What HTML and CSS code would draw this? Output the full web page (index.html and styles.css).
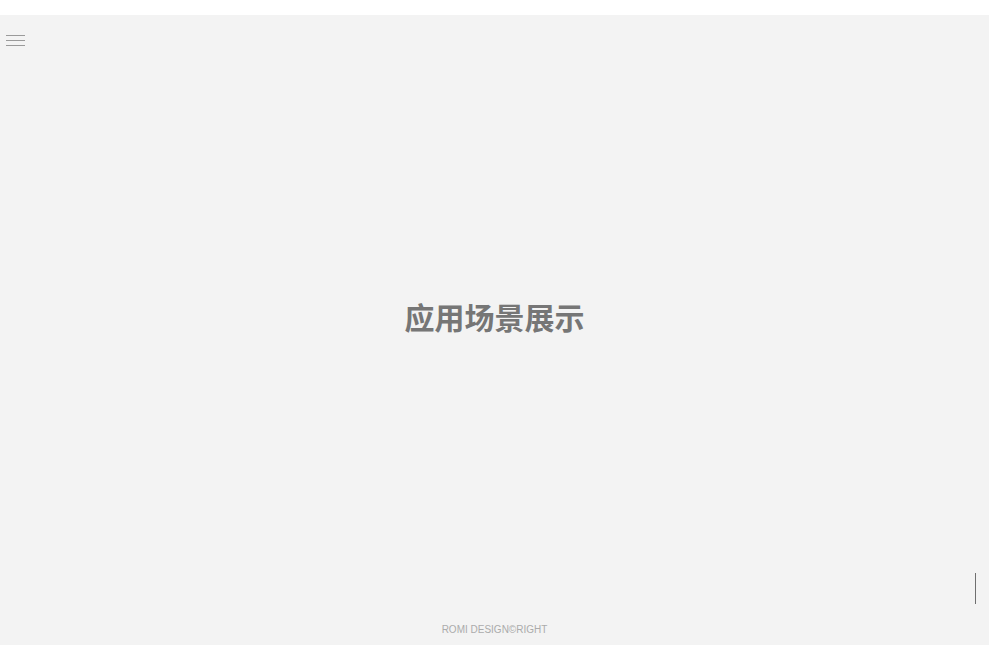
FILE: index.html
```html
<!DOCTYPE html>
<html lang="zh">
<head>
<meta charset="utf-8">
<title>应用场景展示</title>
<link rel="stylesheet" href="styles.css">
</head>
<body>
<div class="top-strip"></div>
<main class="stage">
  <button class="menu" aria-label="menu">
    <span class="bar"></span>
    <span class="bar"></span>
    <span class="bar"></span>
  </button>
  <h1 class="title">应用场景展示</h1>
  <footer class="footer">ROMI DESIGN©RIGHT</footer>
  <div class="scroll-line"></div>
</main>
</body>
</html>
```
FILE: styles.css
```css
html, body {
  margin: 0;
  padding: 0;
  background: #ffffff;
}
body {
  width: 990px;
  height: 659px;
  overflow: hidden;
  font-family: "Liberation Sans", "Noto Sans CJK SC", sans-serif;
}
.top-strip {
  height: 15px;
  background: #ffffff;
}
.stage {
  position: relative;
  width: 989px;
  height: 630px;
  background: #f3f3f3;
  display: flex;
  flex-direction: column;
}
.menu {
  margin: 20px 0 0 6px;
  padding: 0;
  border: 0;
  background: transparent;
  width: 19px;
  height: 11px;
  display: flex;
  flex-direction: column;
  justify-content: space-between;
}
.bar {
  display: block;
  width: 19px;
  height: 1px;
  background: #9a9a9a;
}
.title {
  margin: 255px 0 0;
  text-align: center;
  font-family: "Noto Sans CJK SC", sans-serif;
  font-weight: 700;
  font-size: 30px;
  line-height: 30px;
  color: #767676;
  letter-spacing: 0;
}
.footer {
  margin-top: auto;
  margin-bottom: 9px;
  text-align: center;
  font-size: 10px;
  line-height: 12px;
  color: #ababab;
}
.scroll-line {
  position: absolute;
  left: 975px;
  top: 558px;
  width: 1px;
  height: 31px;
  background: #6f6f6f;
}
```
